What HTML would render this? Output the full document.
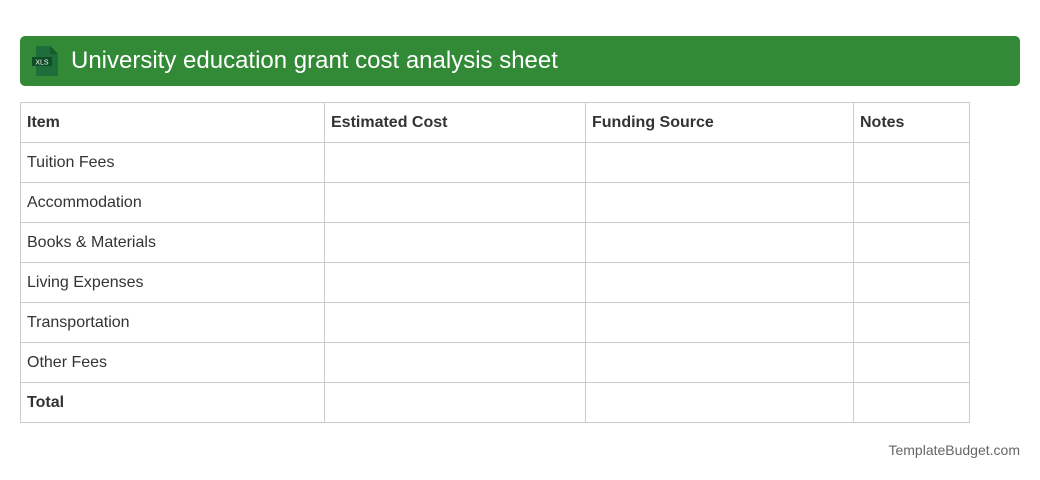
<!DOCTYPE html>
<html><head><style>
body{margin:0;width:1040px;height:480px;background:#fff;font-family:"Liberation Sans",sans-serif;position:relative}
.hdr{position:absolute;left:20px;top:36px;width:1000px;height:50px;background:#328a36;border-radius:5px}
.hdr .t{position:absolute;left:51px;top:11px;color:#fff;font-size:24px}
table{position:absolute;left:20px;top:102px;border-collapse:collapse;font-size:16px;color:#333}
td{border:1px solid #ccc;height:40px;padding:0 0 0 6px;box-sizing:border-box}
tr:first-child td,.b{font-weight:bold}
.f{position:absolute;right:20px;top:442px;color:#666;font-size:14px}
</style></head><body>
<div class="hdr">
<svg style="position:absolute;left:11px;top:10px" width="30" height="30" viewBox="0 0 30 30">
<path d="M5 0H19L27 8V30H5Z" fill="#1e6e3c"/><path d="M19 0L27 8H19Z" fill="#155a2f"/>
<rect x="1" y="11" width="20" height="9" fill="#0f4d26"/>
<text x="11" y="18.5" font-size="7" fill="#fff" text-anchor="middle" font-family="Liberation Sans">XLS</text></svg>
<div class="t">University education grant cost analysis sheet</div></div>
<table>
<tr><td style="width:304px">Item</td><td style="width:261px">Estimated Cost</td><td style="width:268px">Funding Source</td><td style="width:116px">Notes</td></tr>
<tr><td>Tuition Fees</td><td></td><td></td><td></td></tr>
<tr><td>Accommodation</td><td></td><td></td><td></td></tr>
<tr><td>Books &amp; Materials</td><td></td><td></td><td></td></tr>
<tr><td>Living Expenses</td><td></td><td></td><td></td></tr>
<tr><td>Transportation</td><td></td><td></td><td></td></tr>
<tr><td>Other Fees</td><td></td><td></td><td></td></tr>
<tr><td class="b">Total</td><td></td><td></td><td></td></tr>
</table>
<div class="f">TemplateBudget.com</div>
</body></html>
